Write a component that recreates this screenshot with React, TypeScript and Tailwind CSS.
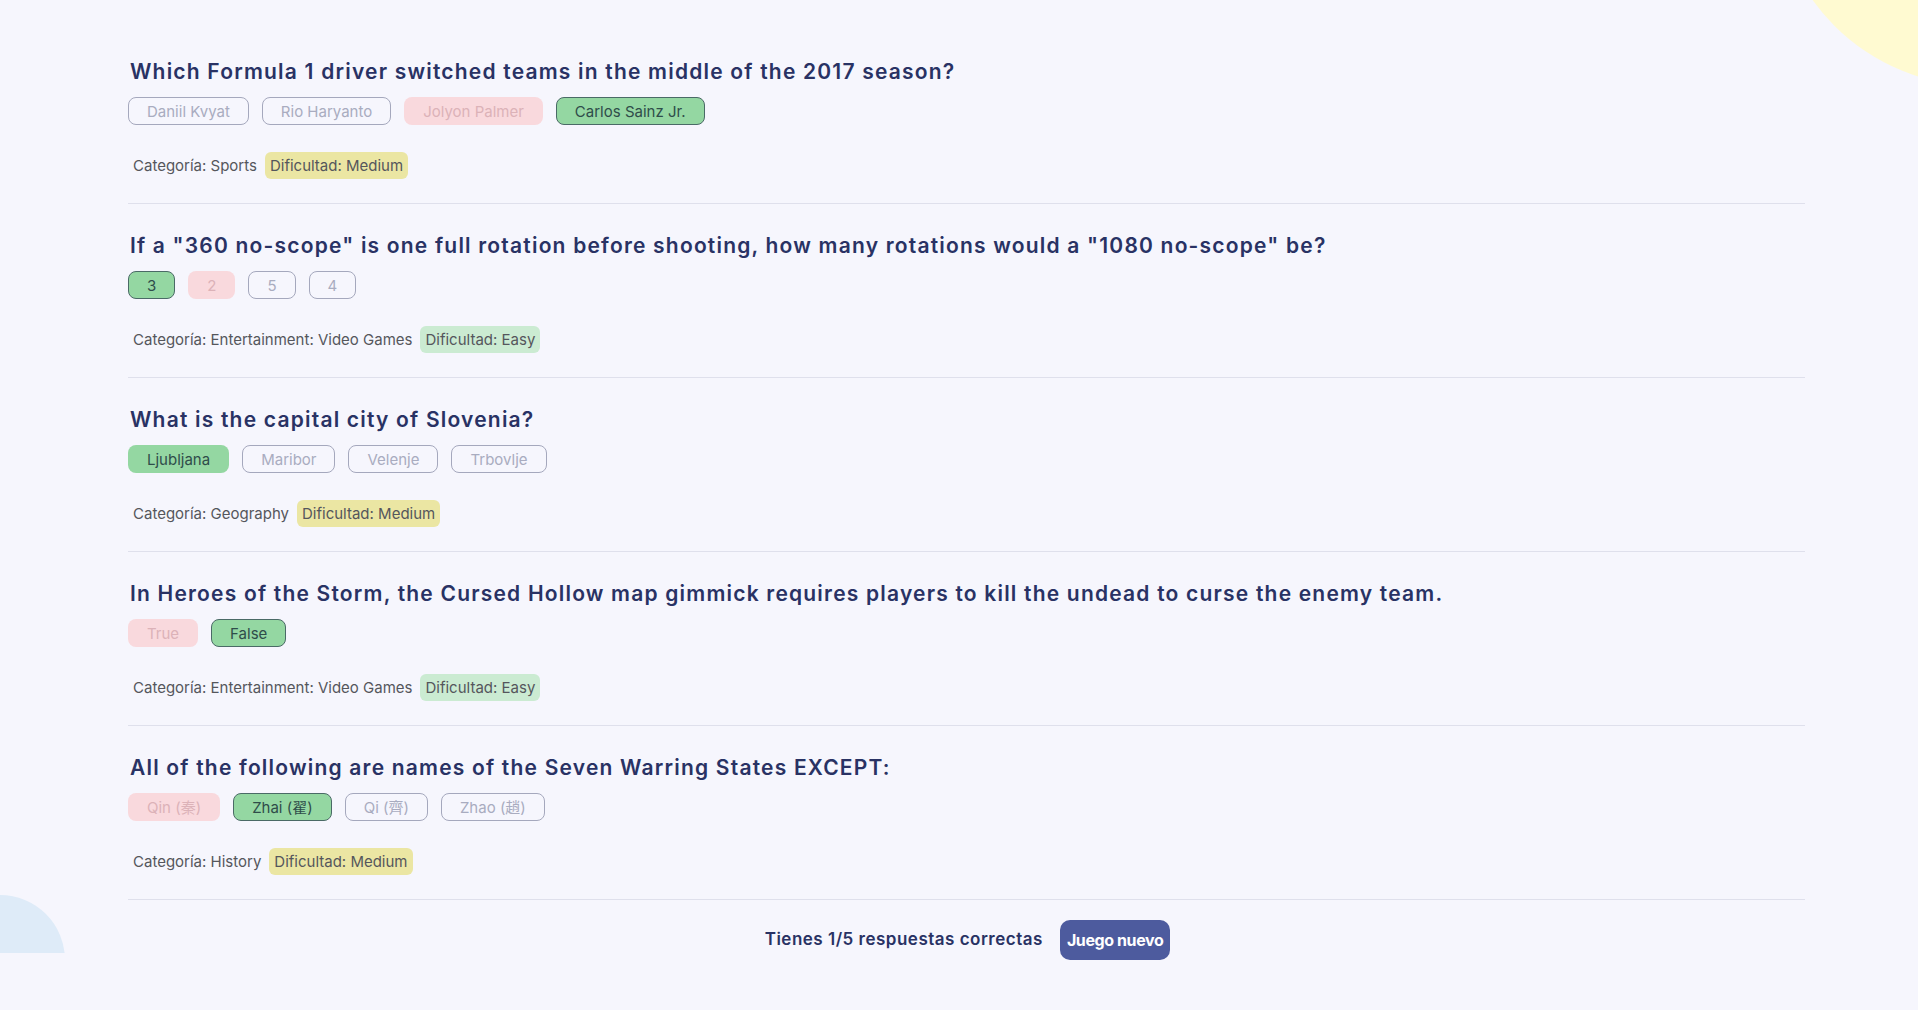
import React from "react";

type AnswerState = "idle" | "wrong" | "correct" | "picked";

interface Answer {
  text: string;
  state: AnswerState;
}

interface Question {
  id: number;
  question: string;
  category: string;
  difficulty: "Easy" | "Medium";
  answers: Answer[];
}

const questions: Question[] = [
  {
    id: 1,
    question: "Which Formula 1 driver switched teams in the middle of the 2017 season?",
    category: "Sports",
    difficulty: "Medium",
    answers: [
      { text: "Daniil Kvyat", state: "idle" },
      { text: "Rio Haryanto", state: "idle" },
      { text: "Jolyon Palmer", state: "wrong" },
      { text: "Carlos Sainz Jr.", state: "picked" },
    ],
  },
  {
    id: 2,
    question:
      'If a "360 no-scope" is one full rotation before shooting, how many rotations would a "1080 no-scope" be?',
    category: "Entertainment: Video Games",
    difficulty: "Easy",
    answers: [
      { text: "3", state: "picked" },
      { text: "2", state: "wrong" },
      { text: "5", state: "idle" },
      { text: "4", state: "idle" },
    ],
  },
  {
    id: 3,
    question: "What is the capital city of Slovenia?",
    category: "Geography",
    difficulty: "Medium",
    answers: [
      { text: "Ljubljana", state: "correct" },
      { text: "Maribor", state: "idle" },
      { text: "Velenje", state: "idle" },
      { text: "Trbovlje", state: "idle" },
    ],
  },
  {
    id: 4,
    question:
      "In Heroes of the Storm, the Cursed Hollow map gimmick requires players to kill the undead to curse the enemy team.",
    category: "Entertainment: Video Games",
    difficulty: "Easy",
    answers: [
      { text: "True", state: "wrong" },
      { text: "False", state: "picked" },
    ],
  },
  {
    id: 5,
    question: "All of the following are names of the Seven Warring States EXCEPT:",
    category: "History",
    difficulty: "Medium",
    answers: [
      { text: "Qin (秦)", state: "wrong" },
      { text: "Zhai (翟)", state: "picked" },
      { text: "Qi (齊)", state: "idle" },
      { text: "Zhao (趙)", state: "idle" },
    ],
  },
];

const answerStyles: Record<AnswerState, string> = {
  idle: "border-[#a5a8bd] text-[#a9acc0] bg-transparent",
  wrong: "border-transparent bg-[#f9d9dd] text-[#dcb2b8]",
  correct: "border-transparent bg-[#94d7a2] text-[#2f4d4a]",
  picked: "border-[#4a6a66] bg-[#94d7a2] text-[#2f4d4a]",
};

function QuestionBlock({ q }: { q: Question }) {
  return (
    <div className="flex flex-col pt-[29px] first:pt-0 border-b border-[#dfe0ec] pb-[24px]">
      <h2 className="text-[21px] leading-[26px] font-semibold tracking-[1.2px] text-[#293264] pl-[2px]">
        {q.question}
      </h2>

      {/* answers */}
      <div className="flex gap-[13px] mt-[12px]">
        {q.answers.map((a) => (
          <span
            key={a.text}
            className={`h-[28px] px-[18px] rounded-lg border flex items-center text-[15px] leading-none ${answerStyles[a.state]}`}
          >
            {a.text}
          </span>
        ))}
      </div>

      {/* meta */}
      <div className="flex items-center gap-[3px] mt-[27px] text-[15px] leading-[19px] text-[#55565c]">
        <span className="px-[5px] py-[4px]">Categoría: {q.category}</span>
        <span
          className={`px-[5px] py-[4px] rounded-md ${
            q.difficulty === "Easy" ? "bg-[#cbebd2]" : "bg-[#ebe6a3]"
          }`}
        >
          Dificultad: {q.difficulty}
        </span>
      </div>
    </div>
  );
}

export default function App() {
  return (
    <div className="relative min-h-screen overflow-hidden bg-[#f6f6fd] font-['Inter','Noto_Sans_CJK_TC',sans-serif]">
      {/* decorative blobs */}
      <div className="absolute left-[1774px] top-[-326px] w-[412px] h-[412px] rounded-full bg-[#fffad1]" />
      <div className="absolute left-0 top-[895px] w-[65px] h-[58px] overflow-hidden">
        <div className="w-[130px] h-[130px] -ml-[65px] rounded-full bg-[#deebf8]" />
      </div>

      <main className="relative pl-[128px] pr-[113px] pt-[59px] pb-[40px]">
        <div className="flex flex-col">
          {questions.map((q) => (
            <QuestionBlock key={q.id} q={q} />
          ))}
        </div>

        <div className="flex items-center justify-center gap-[17px] mt-[20px] pl-[2px]">
          <span className="text-[17px] font-semibold tracking-[0.5px] text-[#293264]">
            Tienes 1/5 respuestas correctas
          </span>
          <button className="h-[40px] px-[7px] rounded-[10px] bg-[#4d5b9e] text-white text-[16px] font-bold tracking-tight">
            Juego nuevo
          </button>
        </div>
      </main>
    </div>
  );
}
